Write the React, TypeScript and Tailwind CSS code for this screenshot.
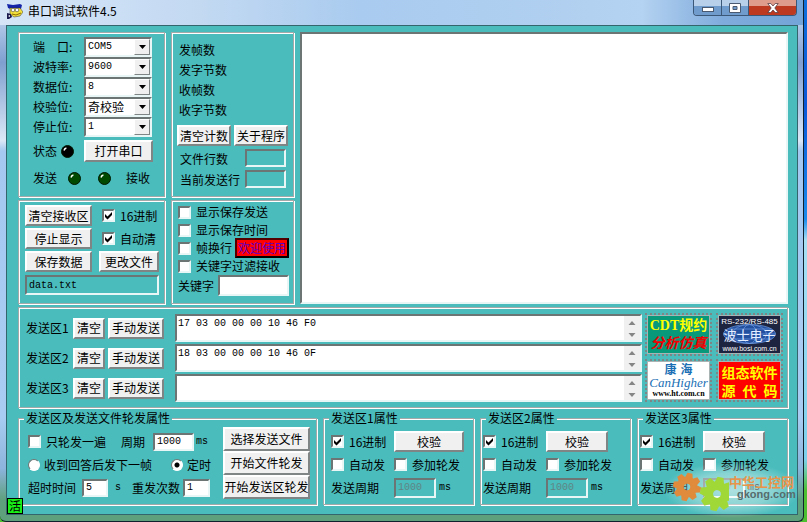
import { useState } from "react";
import type { ReactNode } from "react";
import clsx from "clsx";

const frame =
  "border border-[#a3a9a9] shadow-[1px_1px_0_#fff,inset_1px_1px_0_#fff]";
const sunken =
  "border-2 border-t-[#6d7474] border-l-[#6d7474] border-r-[#e8f6f6] border-b-[#e8f6f6]";
const mono = "font-['Liberation_Mono',monospace] text-[10px] leading-4";

type ButtonProps = {
  children: ReactNode;
  className?: string;
  onClick?: () => void;
};

const Button = ({ children, className, onClick }: ButtonProps) => (
  <button
    type="button"
    onClick={onClick}
    className={clsx(
      "flex shrink-0 items-center justify-center whitespace-nowrap border-2 border-t-white border-l-white border-r-[#7f8484] border-b-[#7f8484] bg-[#f0f0f0] leading-none active:border-[#7f8484]",
      className,
    )}
  >
    {children}
  </button>
);

type CheckProps = { label: string; checked?: boolean; className?: string };

const Check = ({ label, checked = false, className }: CheckProps) => (
  <label className={clsx("flex items-center gap-[5px] whitespace-nowrap", className)}>
    <span className="relative h-[13px] w-[13px] shrink-0">
      <input
        type="checkbox"
        defaultChecked={checked}
        className={clsx("peer block h-[13px] w-[13px] appearance-none bg-white", sunken)}
      />
      <svg
        viewBox="0 0 13 13"
        className="pointer-events-none absolute inset-0 hidden h-[13px] w-[13px] peer-checked:block"
      >
        <path d="M3 5v3l2.5 2.5L10 6V3L5.5 7.5z" fill="#000" />
      </svg>
    </span>
    {label}
  </label>
);

type RadioProps = { label: string; checked: boolean; onChange: () => void };

const Radio = ({ label, checked, onChange }: RadioProps) => (
  <label className="flex items-center gap-1 whitespace-nowrap">
    <input
      type="radio"
      name="mode"
      checked={checked}
      onChange={onChange}
      className="h-3 w-3 shrink-0 appearance-none rounded-full border border-t-[#6d7474] border-l-[#6d7474] border-r-white border-b-white bg-white checked:bg-[radial-gradient(circle,#000_2px,#fff_3px)]"
    />
    {label}
  </label>
);

type FieldProps = {
  label: string;
  value?: string;
  className?: string;
  disabled?: boolean;
};

const Field = ({ label, value = "", className, disabled = false }: FieldProps) => (
  <input
    type="text"
    aria-label={label}
    defaultValue={value}
    disabled={disabled}
    className={clsx(
      "min-w-0 px-0.5 outline-none",
      sunken,
      mono,
      disabled ? "bg-transparent text-[#5f8585]" : "bg-white",
      className,
    )}
  />
);

const Led = ({ color }: { color: string }) => (
  <svg viewBox="0 0 13 13" className="h-[13px] w-[13px] shrink-0">
    <circle cx="6.5" cy="6.5" r="6" fill={color} stroke="#001800" />
    <path d="M3 5.5Q3.4 3.4 5.4 3" fill="none" stroke="#fff" strokeWidth="1.4" />
  </svg>
);

const ports = [
  { label: "端　口", options: ["COM5", "COM1", "COM2"], cjk: false },
  { label: "波特率", options: ["9600", "19200", "115200"], cjk: false },
  { label: "数据位", options: ["8", "7"], cjk: false },
  { label: "校验位", options: ["奇校验", "偶校验", "无校验"], cjk: true },
  { label: "停止位", options: ["1", "2"], cjk: false },
];

const PortPanel = () => (
  <section className={clsx("h-[165px] pl-[14px] pt-1", frame)}>
    {ports.map((port) => (
      <label key={port.label} className="flex h-5 items-center">
        <span className="w-[51px]">{port.label}:</span>
        <span className="relative">
          <select
            className={clsx(
              "block h-5 w-[68px] appearance-none bg-white pl-0.5 outline-none",
              sunken,
              port.cjk ? "text-xs leading-4" : mono,
            )}
          >
            {port.options.map((option) => (
              <option key={option}>{option}</option>
            ))}
          </select>
          <span className="pointer-events-none absolute right-0.5 top-0.5 flex h-4 w-4 items-center justify-center border border-t-white border-l-white border-r-[#7f8484] border-b-[#7f8484] bg-[#f0f0f0]">
            <svg viewBox="0 0 7 4" className="h-1 w-[7px]">
              <path d="M0 0h7L3.5 4z" />
            </svg>
          </span>
        </span>
      </label>
    ))}
    <div className="mt-[3px] flex items-center">
      <span className="w-7">状态</span>
      <Led color="#000" />
      <Button className="ml-[10px] h-[22px] w-[69px]">打开串口</Button>
    </div>
    <div className="mt-2 flex h-4 items-center">
      <span className="w-[35px]">发送</span>
      <Led color="#004a00" />
      <span className="w-[17px]" />
      <Led color="#004a00" />
      <span className="ml-[15px]">接收</span>
    </div>
  </section>
);

const CounterPanel = () => (
  <section className={clsx("h-[165px] pt-[7px]", frame)}>
    <ul className="pl-[7px] leading-5">
      {["发帧数", "发字节数", "收帧数", "收字节数"].map((name) => (
        <li key={name}>{name}</li>
      ))}
    </ul>
    <div className="mt-[5px] flex gap-[3px] pl-[5px]">
      <Button className="h-[21px] w-[54px]">清空计数</Button>
      <Button className="h-[21px] w-[54px]">关于程序</Button>
    </div>
    {["文件行数", "当前发送行"].map((name) => (
      <div key={name} className="mt-[3px] flex h-[18px] items-end pl-2">
        <span className="w-[65px]">{name}</span>
        <Field label={name} disabled className="h-[18px] w-[41px]" />
      </div>
    ))}
  </section>
);

const ReceivePanel = () => (
  <section className={clsx("h-[104px] pl-[6px] pt-1", frame)}>
    <div className="grid grid-cols-[67px_60px] items-center gap-x-[7px] gap-y-0.5">
      <Button className="h-[21px]">清空接收区</Button>
      <Check label="16进制" checked className="pl-[3px]" />
      <Button className="h-[21px]">停止显示</Button>
      <Check label="自动清" checked className="pl-[3px]" />
      <Button className="h-[21px]">保存数据</Button>
      <Button className="h-[21px]">更改文件</Button>
    </div>
    <input
      type="text"
      aria-label="保存文件"
      readOnly
      defaultValue="data.txt"
      className={clsx("mt-[3px] block h-5 w-[134px] bg-transparent px-0.5", sunken, mono)}
    />
  </section>
);

const DisplayPanel = () => (
  <section className={clsx("h-[104px] pl-[6px] pt-0.5", frame)}>
    <Check label="显示保存发送" className="h-[18px]" />
    <Check label="显示保存时间" className="h-[18px]" />
    <div className="flex h-[18px] items-center gap-[3px]">
      <Check label="帧换行" />
      <button
        type="button"
        className="h-5 w-[54px] shrink-0 whitespace-nowrap border-2 border-t-[#500] border-l-[#500] border-r-black border-b-black bg-[#f00] leading-none text-[#5a00c8]"
      >
        欢迎使用
      </button>
    </div>
    <Check label="关键字过滤接收" className="h-[18px]" />
    <div className="flex items-center">
      <span className="w-10">关键字</span>
      <Field label="关键字" className="h-[21px] w-[71px]" />
    </div>
  </section>
);

const lines = [
  { id: 1, text: "17 03 00 00 00 10 46 F0" },
  { id: 2, text: "18 03 00 00 00 10 46 0F" },
  { id: 3, text: "" },
];

const SendLine = ({ id, text }: { id: number; text: string }) => {
  const [value, setValue] = useState<string>(text);

  return (
    <div className="flex h-7 items-center">
      <label htmlFor={`line-${id}`} className="w-[47px] shrink-0">
        发送区{id}
      </label>
      <Button className="h-[21px] w-8" onClick={() => setValue("")}>
        清空
      </Button>
      <Button className="ml-[3px] h-[21px] w-14">手动发送</Button>
      <div className={clsx("ml-[11px] flex h-7 min-w-0 flex-1 bg-white", sunken)}>
        <textarea
          id={`line-${id}`}
          value={value}
          onChange={(e) => setValue(e.target.value)}
          className={clsx("h-full min-w-0 flex-1 resize-none overflow-hidden pl-px outline-none", mono)}
        />
        <svg viewBox="0 0 16 24" className="h-6 w-4 shrink-0 bg-[#f0f0f0]">
          <path d="M4.5 9h7L8 5z" fill="#858585" />
          <path d="M4.5 17h7L8 21z" fill="#858585" />
        </svg>
      </div>
    </div>
  );
};

const banner =
  "flex h-[43px] w-[67px] flex-col items-center justify-center overflow-hidden whitespace-nowrap border-2 border-dotted border-[#7c8686] bg-clip-padding leading-none outline-1 -outline-offset-3 outline-[#a8b4b4]";

const Banners = () => (
  <div className="grid shrink-0 grid-cols-[67px_67px] gap-x-1 gap-y-[3px]">
    <button
      type="button"
      className={clsx(banner, "gap-1 bg-[#08987a] font-['Liberation_Serif','Noto_Sans_CJK_SC',serif] text-[14px] font-bold")}
    >
      <span className="text-[#ff0]">CDT规约</span>
      <span className="italic text-[#f00000]">分析仿真</span>
    </button>
    <button
      type="button"
      className={clsx(banner, "relative bg-[#1d2440] font-['Liberation_Sans','Noto_Sans_CJK_SC',sans-serif] text-[8px] text-white")}
    >
      <svg viewBox="0 0 60 20" className="absolute inset-x-0 top-[9px] h-5 w-full">
        <ellipse cx="30" cy="10" rx="26" ry="9.5" fill="#2450a0" />
        <g fill="none" stroke="#6f9be0" strokeWidth="0.7">
          <ellipse cx="30" cy="10" rx="26" ry="9.5" />
          <ellipse cx="30" cy="10" rx="17" ry="9.5" />
          <ellipse cx="30" cy="10" rx="7" ry="9.5" />
          <path d="M4 10h52M8 5h44M8 15h44" />
        </g>
      </svg>
      <span className="relative">RS-232/RS-485</span>
      <span className="relative my-[3px] text-[13px] text-[#e4eeff]">波士电子</span>
      <span className="relative text-[7px]">www.bosi.com.cn</span>
    </button>
    <button
      type="button"
      className={clsx(banner, "bg-white font-['Liberation_Serif','Noto_Sans_CJK_SC',serif] text-[#1b6fb5]")}
    >
      <span className="flex gap-1 text-[12px] font-bold">
        <span>康</span>
        <span>海</span>
      </span>
      <span className="text-[13px] italic">CanHigher</span>
      <span className="mt-px text-[8px] font-bold text-black">www.ht.com.cn</span>
    </button>
    <button
      type="button"
      className={clsx(banner, "gap-1 bg-[#f00] text-[14px] font-bold text-[#ff0]")}
    >
      <span>组态软件</span>
      <span className="flex w-14 justify-between">
        <span>源</span>
        <span>代</span>
        <span>码</span>
      </span>
    </button>
  </div>
);

const legend = "ml-[5px] h-[14px] whitespace-nowrap bg-[#4abcbc] px-0.5 leading-[14px]";

const PollGroup = () => {
  const [mode, setMode] = useState<"answer" | "timer">("timer");

  return (
    <fieldset className={clsx("h-[94px] w-[299px] shrink-0", frame)}>
      <legend className={legend}>发送区及发送文件轮发属性</legend>
      <div className="flex pl-[9px] pt-0.5">
        <div className="w-[195px] pt-[3px]">
          <div className="flex h-[23px] items-center">
            <Check label="只轮发一遍" className="w-[93px]" />
            <span className="w-8">周期</span>
            <Field label="周期" value="1000" className="h-[18px] w-[41px]" />
            <span className={clsx("ml-0.5", mono)}>ms</span>
          </div>
          <div className="flex h-[23px] items-center justify-between pr-3">
            <Radio
              label="收到回答后发下一帧"
              checked={mode === "answer"}
              onChange={() => setMode("answer")}
            />
            <Radio
              label="定时"
              checked={mode === "timer"}
              onChange={() => setMode("timer")}
            />
          </div>
          <div className="flex h-[23px] items-center">
            <span className="w-[54px]">超时时间</span>
            <Field label="超时时间" value="5" className="h-[18px] w-[26px]" />
            <span className={clsx("w-6 pl-[7px]", mono)}>s</span>
            <span className="w-[51px]">重发次数</span>
            <Field label="重发次数" value="1" className="h-[18px] w-[27px]" />
          </div>
        </div>
        <div>
          <Button className="h-6 w-[87px]">选择发送文件</Button>
          <Button className="h-6 w-[87px]">开始文件轮发</Button>
          <Button className="h-6 w-[87px]">开始发送区轮发</Button>
        </div>
      </div>
    </fieldset>
  );
};

const zones = [
  { id: 1, pad: "pl-[7px]", button: "w-[70px]" },
  { id: 2, pad: "pl-0.5", button: "w-[62px]" },
  { id: 3, pad: "pl-0.5", button: "w-[62px]" },
];

const ZoneGroup = ({ id, pad, button }: (typeof zones)[number]) => (
  <fieldset className={clsx("h-[94px] min-w-0 flex-1", frame)}>
    <legend className={legend}>发送区{id}属性</legend>
    <div className={clsx("grid auto-rows-[23px] grid-cols-[63px_1fr] items-center pt-[5px]", pad)}>
      <Check label="16进制" checked />
      <Button className={clsx("h-[21px]", button)}>校验</Button>
      <Check label="自动发" />
      <Check label="参加轮发" />
      <span>发送周期</span>
      <div className="flex items-center gap-[3px]">
        <Field label="发送周期" value="1000" disabled className="h-5 w-[42px]" />
        <span className={mono}>ms</span>
      </div>
    </div>
  </fieldset>
);

const teeth = [0, 45, 90, 135, 180, 225, 270, 315];

const Gear = ({ x, y, r, color }: { x: number; y: number; r: number; color: string }) => (
  <g transform={`translate(${x} ${y}) rotate(12)`}>
    {teeth.map((angle) => (
      <path
        key={angle}
        d={`M-${r * 0.18} -${r}h${r * 0.36}L${r * 0.3} -${r * 0.6}h-${r * 0.6}z`}
        transform={`rotate(${angle})`}
        fill={color}
      />
    ))}
    <circle r={r * 0.48} fill="none" stroke={color} strokeWidth={r * 0.5} />
  </g>
);

const Watermark = () => (
  <div className="pointer-events-none absolute -bottom-1 -right-1 flex h-14 w-[138px] items-center bg-[radial-gradient(closest-side,rgba(255,255,255,0.55),rgba(255,255,255,0.35)_60%,transparent)]">
    <svg viewBox="0 0 66 50" className="h-[50px] w-[66px] shrink-0">
      <Gear x={24} y={22} r={14} color="#e08a3c" />
      <Gear x={54} y={29} r={17} color="#a0d838" />
    </svg>
    <div className="pb-1 leading-[13px]">
      <p className="whitespace-nowrap text-[13px] font-bold text-[#e8944a]">中华工控网</p>
      <p className="pl-2 font-['Liberation_Sans',sans-serif] text-[11px] font-bold text-[#566c6c]">
        gkong.com
      </p>
    </div>
  </div>
);

const TitleBar = () => (
  <header className="flex h-[25px] items-start justify-between bg-[linear-gradient(90deg,#d5e5f7_0%,#c3d9f2_25%,#a9cbef_45%,#b4d2f1_80%,#7fabdc_90%,#74a5d8_100%)] pl-[7px] pr-[6px]">
    <div className="flex items-center gap-[5px] pt-[3px]">
      <svg viewBox="0 0 16 16" className="h-4 w-4">
        <path d="M0 1l6 1 7-1 2 1-1 4-8 1-5-2z" fill="#1424a8" />
        <path d="M3 5h10l3 4-3 4-6 1-4-3z" fill="#f4e23c" stroke="#333" strokeWidth="0.5" />
        <circle cx="6" cy="7" r="1.8" fill="#fff" stroke="#222" strokeWidth="0.5" />
        <circle cx="10" cy="7" r="1.8" fill="#fff" stroke="#222" strokeWidth="0.5" />
        <path d="M5 11l4 1 5-2" stroke="#8c6a00" fill="none" />
        <path d="M0 10l4 1 1 3-3 2H0z" fill="#1a1a50" />
        <path d="M1 13l2-1v2z" fill="#fff" />
      </svg>
      <h1 className="leading-4">串口调试软件4.5</h1>
    </div>
    <div className="flex h-4 overflow-hidden rounded-b-[4px] border border-t-0 border-[#3c5878]">
      <button
        type="button"
        aria-label="最小化"
        className="flex w-7 items-center justify-center border-r border-[#3c5878] bg-linear-to-b from-[#b9d0ea] from-40% to-[#6f9ccc] to-40%"
      >
        <svg viewBox="0 0 14 10" className="h-[10px] w-[14px]">
          <rect x="1.5" y="4.5" width="11" height="4" fill="#fff" stroke="#4a5a70" />
        </svg>
      </button>
      <button
        type="button"
        aria-label="最大化"
        className="flex w-[27px] items-center justify-center border-r border-[#3c5878] bg-linear-to-b from-[#b9d0ea] from-40% to-[#6f9ccc] to-40%"
      >
        <svg viewBox="0 0 12 10" className="h-[10px] w-3">
          <path
            d="M.5.5h11v9H.5zM4 3.5v3h4v-3z"
            fill="#fff"
            fillRule="evenodd"
            stroke="#4a5a70"
          />
        </svg>
      </button>
      <button
        type="button"
        aria-label="关闭"
        className="flex w-[47px] items-center justify-center bg-linear-to-b from-[#dd9c8c] from-40% to-[#bd3a20] to-40%"
      >
        <svg viewBox="0 0 12 10" className="h-[10px] w-3">
          <path
            d="M.8.5h3L6 3 8.2.5h3L7.8 5l3.4 4.500h-3L6 7 3.800 9.500h-3L4.200 5z"
            fill="#fff"
            stroke="#5a4048"
            strokeWidth="0.8"
          />
        </svg>
      </button>
    </div>
  </header>
);

export default function App() {
  return (
    <div className="flex min-h-screen bg-[linear-gradient(#0f70dc_0%,#0a58d8_20%,#1a8cec_42%,#a8e0f4_46%,#7cd0ec_88%,#4cc030_94%)] pr-[3px] font-['Noto_Sans_CJK_SC',sans-serif] text-xs leading-4 text-black">
      <div className="flex min-w-0 flex-1 flex-col overflow-hidden rounded-b-md border-r border-b border-[#10202c] bg-[linear-gradient(#cfe2f7_0%,#7f9fd0_12%,#dce8f6_27%,#a4c8f0_29%,#a9cdf2_80%,#8cb4dc_90%,#5fa07c_96%)]">
        <TitleBar />
        <div className="flex flex-1 pb-[6px] pl-[6px] pr-[5px]">
          <main className="relative min-w-0 flex-1 border border-[#34646c] bg-[#4abcbc] pb-[7px] pl-[11px] pr-[9px] pt-[6px]">
            <div className="flex">
              <div className="flex w-[147px] shrink-0 flex-col gap-[3px]">
                <PortPanel />
                <ReceivePanel />
              </div>
              <div className="ml-[6px] flex w-[123px] shrink-0 flex-col gap-[3px]">
                <CounterPanel />
                <DisplayPanel />
              </div>
              <textarea
                aria-label="接收区"
                readOnly
                className={clsx("ml-[6px] min-w-0 flex-1 resize-none bg-white outline-none", sunken)}
              />
            </div>
            <section className={clsx("mt-[3px] flex gap-[3px] py-[5px] pl-[7px] pr-1", frame)}>
              <div className="flex min-w-0 flex-1 flex-col gap-0.5 pt-px">
                {lines.map((line) => (
                  <SendLine key={line.id} id={line.id} text={line.text} />
                ))}
              </div>
              <Banners />
            </section>
            <div className="mt-[3px] flex gap-[6px]">
              <PollGroup />
              {zones.map((zone) => (
                <ZoneGroup key={zone.id} {...zone} />
              ))}
            </div>
            <span className="absolute bottom-0 left-0 flex h-4 w-4 items-center justify-center border border-black bg-[#18f018]">
              活
            </span>
            <Watermark />
          </main>
        </div>
      </div>
    </div>
  );
}
